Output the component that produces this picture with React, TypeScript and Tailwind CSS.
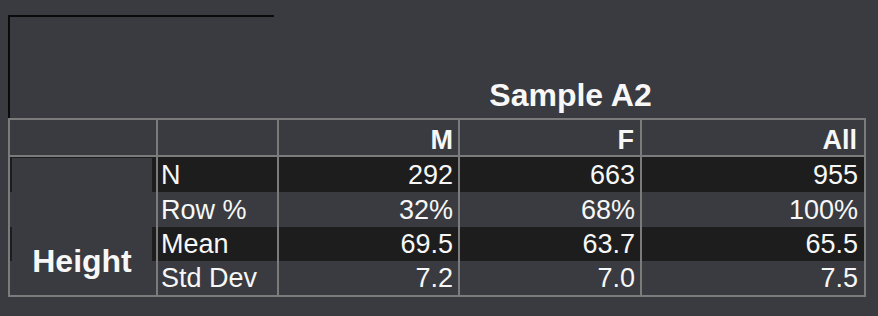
const rows = [
  { label: "N", m: "292", f: "663", all: "955", dark: true, h: "h-[35px]" },
  { label: "Row %", m: "32%", f: "68%", all: "100%", dark: false, h: "h-[35px]" },
  { label: "Mean", m: "69.5", f: "63.7", all: "65.5", dark: true, h: "h-[34px]" },
  { label: "Std Dev", m: "7.2", f: "7.0", all: "7.5", dark: false, h: "h-[34px]" },
];

export default function App() {
  return (
    <div
      className="w-[878px] h-[316px] bg-[#393b40] text-[#f7f7f7] pt-[15px] pl-[8px] overflow-hidden"
      style={{ fontFamily: '"Liberation Sans", Arial, sans-serif' }}
    >
      {/* frame + title */}
      <div className="flex items-end h-[103px]">
        <div className="w-[266px] h-[103px] border-t-2 border-l-2 border-[#0b0b0b]" />
        <div className="w-[587px] ml-[3px] pb-[7px] text-center text-[32px] font-bold leading-none">
          Sample A2
        </div>
      </div>

      {/* table */}
      <div className="w-[858px] border-2 border-[#7b7b7b]">
        <div className="flex h-[37px] border-b-2 border-[#7b7b7b] text-[27px] font-bold leading-none">
          <div className="w-[146px]" />
          <div className="w-[121px] border-l-2 border-[#7b7b7b]" />
          <div className="w-[181px] border-l-2 border-[#7b7b7b] flex items-center justify-end pr-[5px] pt-[5px]">M</div>
          <div className="w-[182px] border-l-2 border-[#7b7b7b] flex items-center justify-end pr-[6px] pt-[5px]">F</div>
          <div className="w-[224px] border-l-2 border-[#7b7b7b] flex items-center justify-end pr-[7px] pt-[5px]">All</div>
        </div>

        <div className="flex text-[27px] leading-none">
          <div className="w-[146px] pl-[2px] pr-[4px] pt-[1px] flex bg-[linear-gradient(to_bottom,#1d1d1d_0px,#1d1d1d_35px,transparent_35px,transparent_70px,#1d1d1d_70px,#1d1d1d_104px,transparent_104px)]">
            <div className="flex-1 bg-[#393b40] flex items-end justify-center pb-[18px] text-[32px] font-bold">
              Height
            </div>
          </div>
          <div className="w-[708px] flex flex-col">
            {rows.map((r) => (
              <div key={r.label} className={`flex ${r.h} ${r.dark ? "bg-[#1d1d1d]" : ""}`}>
                <div className="w-[121px] border-l-2 border-[#7b7b7b] flex items-center pl-[3px] pt-[1px]">{r.label}</div>
                <div className="w-[181px] border-l-2 border-[#7b7b7b] flex items-center justify-end pr-[5px] pt-[1px]">{r.m}</div>
                <div className="w-[182px] border-l-2 border-[#7b7b7b] flex items-center justify-end pr-[5px] pt-[1px]">{r.f}</div>
                <div className="w-[224px] border-l-2 border-[#7b7b7b] flex items-center justify-end pr-[6px] pt-[1px]">{r.all}</div>
              </div>
            ))}
          </div>
        </div>
      </div>
    </div>
  );
}
